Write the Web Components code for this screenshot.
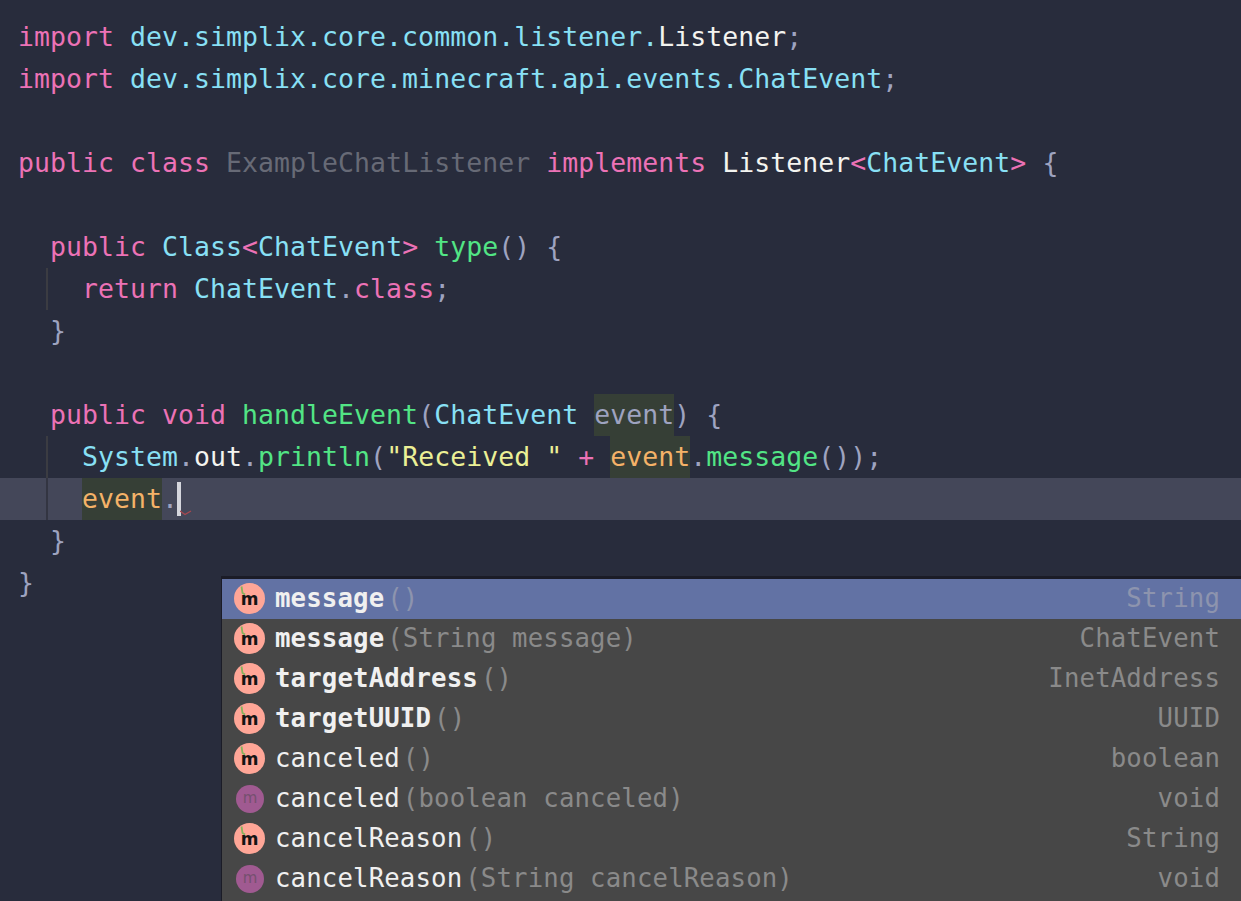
<!DOCTYPE html>
<html>
<head>
<meta charset="utf-8">
<title>ExampleChatListener</title>
<style>
  html, body { margin: 0; height: 100%; overflow: hidden; background: #282c3c; }
</style>
</head>
<body>
<code-editor>
  <code-line><code-tok kind="kw">import</code-tok> <code-tok kind="type">dev.simplix.core.common.listener.</code-tok><code-tok kind="plain">Listener</code-tok><code-tok kind="punc">;</code-tok></code-line>
  <code-line><code-tok kind="kw">import</code-tok> <code-tok kind="type">dev.simplix.core.minecraft.api.events.ChatEvent</code-tok><code-tok kind="punc">;</code-tok></code-line>
  <code-line></code-line>
  <code-line><code-tok kind="kw">public class</code-tok> <code-tok kind="unused">ExampleChatListener</code-tok> <code-tok kind="kw">implements</code-tok> <code-tok kind="plain">Listener</code-tok><code-tok kind="kw">&lt;</code-tok><code-tok kind="type">ChatEvent</code-tok><code-tok kind="kw">&gt;</code-tok> <code-tok kind="punc">{</code-tok></code-line>
  <code-line></code-line>
  <code-line indent="2"><code-tok kind="kw">public</code-tok> <code-tok kind="type">Class</code-tok><code-tok kind="kw">&lt;</code-tok><code-tok kind="type">ChatEvent</code-tok><code-tok kind="kw">&gt;</code-tok> <code-tok kind="fn">type</code-tok><code-tok kind="punc">() {</code-tok></code-line>
  <code-line indent="4" guide><code-tok kind="kw">return</code-tok> <code-tok kind="type">ChatEvent</code-tok><code-tok kind="punc">.</code-tok><code-tok kind="kw">class</code-tok><code-tok kind="punc">;</code-tok></code-line>
  <code-line indent="2"><code-tok kind="punc">}</code-tok></code-line>
  <code-line></code-line>
  <code-line indent="2"><code-tok kind="kw">public void</code-tok> <code-tok kind="fn">handleEvent</code-tok><code-tok kind="punc">(</code-tok><code-tok kind="type">ChatEvent</code-tok> <code-tok kind="param" mark>event</code-tok><code-tok kind="punc">) {</code-tok></code-line>
  <code-line indent="4" guide><code-tok kind="type">System</code-tok><code-tok kind="punc">.</code-tok><code-tok kind="plain">out</code-tok><code-tok kind="punc">.</code-tok><code-tok kind="fn">println</code-tok><code-tok kind="punc">(</code-tok><code-tok kind="str">"Received "</code-tok> <code-tok kind="kw">+</code-tok> <code-tok kind="var" mark>event</code-tok><code-tok kind="punc">.</code-tok><code-tok kind="fn">message</code-tok><code-tok kind="punc">());</code-tok></code-line>
  <code-line indent="4" guide current><code-tok kind="var" mark>event</code-tok><code-tok kind="punc">.</code-tok><code-caret></code-caret></code-line>
  <code-line indent="2"><code-tok kind="punc">}</code-tok></code-line>
  <code-line><code-tok kind="punc">}</code-tok></code-line>

  <completion-popup slot="overlay">
    <completion-item selected bold pinned name="message" args="()" ret="String"></completion-item>
    <completion-item bold pinned name="message" args="(String message)" ret="ChatEvent"></completion-item>
    <completion-item bold pinned name="targetAddress" args="()" ret="InetAddress"></completion-item>
    <completion-item bold pinned name="targetUUID" args="()" ret="UUID"></completion-item>
    <completion-item pinned name="canceled" args="()" ret="boolean"></completion-item>
    <completion-item name="canceled" args="(boolean canceled)" ret="void"></completion-item>
    <completion-item pinned name="cancelReason" args="()" ret="String"></completion-item>
    <completion-item name="cancelReason" args="(String cancelReason)" ret="void"></completion-item>
  </completion-popup>
</code-editor>

<script>
const MONO = `"DejaVu Sans Mono", "Liberation Mono", monospace`;

class CodeEditor extends HTMLElement {
  constructor() {
    super();
    this.attachShadow({ mode: "open" });
    this.shadowRoot.innerHTML = `
      <style>
      :host {
        display: block;
        position: relative;
        height: 901px;
        overflow: hidden;
        box-sizing: border-box;
        padding-top: 16px;
        background: #282c3c;
        font: 26.5px/42px ${MONO};
        letter-spacing: 0.05px;
        color: #a6accd;
      }
      </style>
      <slot></slot>
      <slot name="overlay"></slot>
    `;
  }
}
customElements.define("code-editor", CodeEditor);

class CodeLine extends HTMLElement {
  constructor() {
    super();
    this.attachShadow({ mode: "open" });
    const indent = Number(this.getAttribute("indent") || 0);
    const guide = this.hasAttribute("guide");
    this.shadowRoot.innerHTML = `
      <style>
      :host {
        display: flex;
        height: 42px;
      }
      :host([current]) {
        background: #444759;
      }
      .guide {
        flex: none;
        width: 2px;
        margin-left: 46px;
        margin-right: 34px;
        background: #3b3c42;
      }
      :host([current]) .guide {
        background: #333542;
      }
      .text {
        display: block;
        height: 42px;
        white-space: pre;
      }
      </style>
      ${guide ? '<span class="guide"></span>' : ""}
      <span class="text" style="padding-left:${guide ? 0 : 18 + indent * 16}px"><slot></slot></span>
    `;
  }
}
customElements.define("code-line", CodeLine);

class CodeTok extends HTMLElement {
  constructor() {
    super();
    this.attachShadow({ mode: "open" });
    this.shadowRoot.innerHTML = `
      <style>
      :host { display: inline-block; height: 42px; white-space: normal; }
      :host([kind="kw"]) { color: #ec72b6; }
      :host([kind="type"]) { color: #88e0f5; }
      :host([kind="plain"]) { color: #f4f4f0; }
      :host([kind="punc"]) { color: #9ea3c0; }
      :host([kind="unused"]) { color: #676a76; }
      :host([kind="fn"]) { color: #52e585; }
      :host([kind="str"]) { color: #ecf096; }
      :host([kind="param"]) { color: #9ea3c0; }
      :host([kind="var"]) { color: #f4b268; }
      :host([mark]) { background: #363f36; }
      slot { white-space: pre; }
      </style>
      <slot></slot>
    `;
  }
}
customElements.define("code-tok", CodeTok);

class CodeCaret extends HTMLElement {
  constructor() {
    super();
    this.attachShadow({ mode: "open" });
    this.shadowRoot.innerHTML = `
      <style>
      :host {
        display: inline-block;
        position: relative;
        width: 0;
        height: 42px;
        vertical-align: top;
        white-space: normal;
      }
      .bar {
        position: absolute;
        left: -1px;
        top: 4px;
        width: 4px;
        height: 34px;
        background: #d5d6dd;
      }
      svg {
        position: absolute;
        left: 2px;
        top: 32px;
      }
      </style>
      <span class="bar"></span>
      <svg width="12" height="6" viewBox="0 0 12 6" fill="none">
        <path d="M0 1 L5 4.5 L11 1" stroke="#a8474f" stroke-width="1.4"/>
      </svg>
    `;
  }
}
customElements.define("code-caret", CodeCaret);

class CompletionPopup extends HTMLElement {
  constructor() {
    super();
    this.attachShadow({ mode: "open" });
    this.shadowRoot.innerHTML = `
      <style>
      :host {
        position: absolute;
        left: 221px;
        top: 576px;
        right: 0;
        bottom: 0;
        display: block;
        box-sizing: border-box;
        border-top: 3px solid #1b1c27;
        border-left: 1px solid #1b1c27;
        background: #474747;
        font: 25.7px/40px ${MONO};
        letter-spacing: 0.14px;
      }
      </style>
      <slot></slot>
    `;
  }
}
customElements.define("completion-popup", CompletionPopup);

class CompletionItem extends HTMLElement {
  constructor() {
    super();
    this.attachShadow({ mode: "open" });
    const name = this.getAttribute("name");
    const args = this.getAttribute("args");
    const ret = this.getAttribute("ret");
    const pinned = this.hasAttribute("pinned");
    this.shadowRoot.innerHTML = `
      <style>
      :host {
        display: flex;
        align-items: center;
        box-sizing: border-box;
        height: 40px;
        padding: 0 21px 1px 12px;
      }
      :host([selected]) { background: #6272a4; }
      .icon {
        flex: none;
        position: relative;
        box-sizing: border-box;
        width: 31px;
        height: 31px;
        margin-right: 10px;
        display: grid;
        place-items: center;
        border-radius: 50%;
        letter-spacing: 0;
        font: 700 17px/1 "DejaVu Sans", sans-serif;
      }
      .icon.pinned { background: #ffa697; color: #141414; padding-top: 2px; }
      .icon.plain {
        width: 28px;
        height: 28px;
        margin: 0 11px 0 2px;
        background: #a05a91;
        color: #75506f;
        font-weight: 400;
        font-size: 15px;
      }
      .icon svg { position: absolute; left: 6px; top: 3px; }
      .name, .args, .ret { margin-bottom: 2px; }
      .name { color: #f0f0f0; }
      :host([bold]) .name { font-weight: 700; }
      .args { margin-left: 3px; color: #8a8a8a; flex: 1; }
      :host([selected]) .args { color: #8d94ae; }
      .ret { color: #8a8a8a; }
      :host([selected]) .ret { color: #8d94ae; }
      </style>
      <span class="icon ${pinned ? "pinned" : "plain"}">${pinned
        ? '<svg width="6" height="10" viewBox="0 0 6 10" fill="none"><path d="M1.5 0.5 L2.5 7 L5 8.5" stroke="#86b45c" stroke-width="1.8"/></svg>'
        : ""}m</span>
      <span class="name">${name}</span>
      <span class="args">${args}</span>
      <span class="ret">${ret}</span>
    `;
  }
}
customElements.define("completion-item", CompletionItem);
</script>
</body>
</html>
